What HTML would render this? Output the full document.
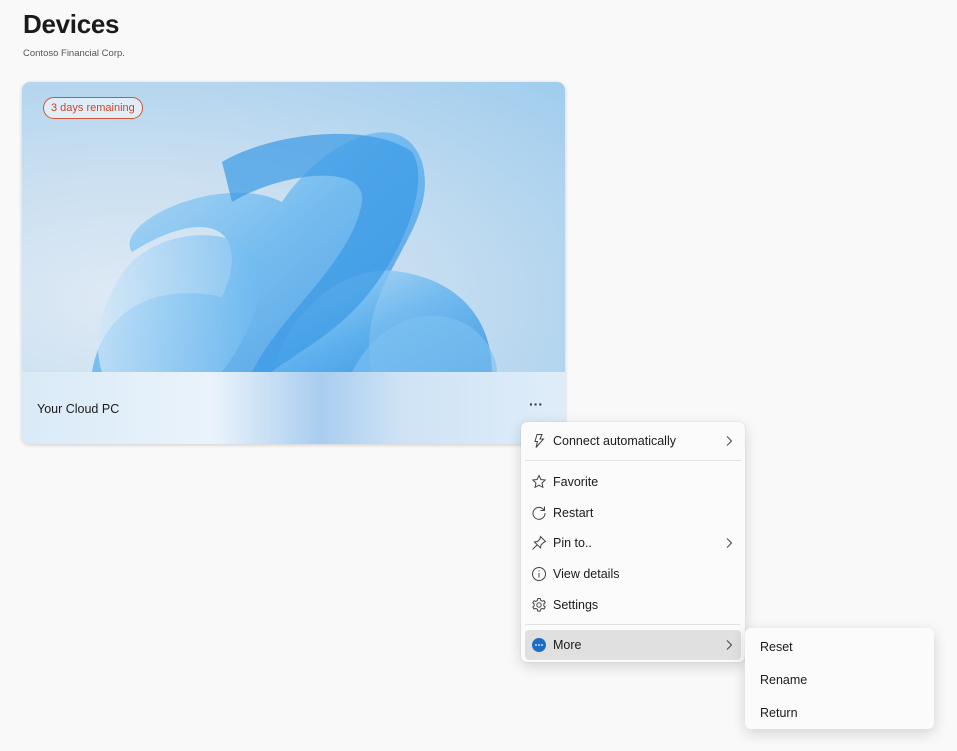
<!DOCTYPE html>
<html><head><meta charset="utf-8">
<style>
*{box-sizing:border-box;margin:0;padding:0}
body{width:957px;height:751px;background:#f9f9f9;font-family:"Liberation Sans",sans-serif;position:relative;overflow:hidden;color:#1b1b1b}
h1{position:absolute;left:23px;top:9px;font-size:26px;font-weight:bold;letter-spacing:-0.3px}
.sub{position:absolute;left:23px;top:48px;font-size:9.5px;color:#555}
.card{position:absolute;left:22px;top:82px;width:543px;height:362px;border-radius:8px;overflow:hidden;box-shadow:0 1px 4px rgba(0,0,0,.18);background:radial-gradient(ellipse at 20% 60%,#dfeaf5 0%,#c8def0 45%,#9fcdee 100%)}
.badge{position:absolute;left:21px;top:15px;height:22px;padding:0 7px;border:1.5px solid #d2553a;border-radius:11px;color:#c8452a;font-size:11px;line-height:20px;background:rgba(255,255,255,.55)}
.band{position:absolute;left:0;top:290px;width:543px;height:72px;background:linear-gradient(90deg,#d9eaf7 0%,#eaf3fb 35%,#a9cdef 55%,#cfe3f5 70%,#dfedf9 100%)}
.band span{position:absolute;left:15px;top:30px;font-size:12.5px}
.dots{position:absolute;left:507px;top:24px;font-size:14px;font-weight:bold;letter-spacing:0px;color:#333}
.menu{position:absolute;left:521px;top:422px;width:224px;height:240px;background:#fbfbfb;border-radius:6px;box-shadow:0 4px 14px rgba(0,0,0,.16),0 0 1px rgba(0,0,0,.2)}
.it{position:absolute;left:0;width:224px;height:30px;font-size:12.5px;line-height:30px}
.it svg{position:absolute;left:10px;top:7px}
.it .t{position:absolute;left:32px}
.it svg.ch{left:auto;right:10px;top:9px}
.sep{position:absolute;left:4px;width:216px;height:1px;background:#e3e3e3}
.more{background:#e0e0e0;border-radius:4px;left:4px;width:216px}
.sm{position:absolute;left:745px;top:628px;width:189px;height:101px;background:#fbfbfb;border-radius:6px;box-shadow:0 4px 14px rgba(0,0,0,.16)}
.sm div{position:absolute;left:15px;font-size:12.5px}
</style></head><body>
<h1>Devices</h1>
<div class="sub">Contoso Financial Corp.</div>
<div class="card">
<svg width="543" height="290" style="position:absolute;left:0;top:0">
<defs>
<linearGradient id="g1" x1="0" y1="0" x2="1" y2="1"><stop offset="0" stop-color="#bfe0f7"/><stop offset=".5" stop-color="#5fb3ef"/><stop offset="1" stop-color="#2f8ee0"/></linearGradient>
<linearGradient id="g2" x1="0" y1="0" x2="1" y2="0"><stop offset="0" stop-color="#cfe6f8"/><stop offset="1" stop-color="#6dbaf0"/></linearGradient>
</defs>
<path d="M70 290 C80 230 130 200 200 215 C230 150 190 120 110 170 C90 140 200 90 260 120 C300 60 380 20 400 80 C420 150 330 200 350 290 Z" fill="url(#g1)" opacity=".8"/>
<path d="M95 200 C120 150 200 140 230 170 C250 200 230 250 200 290 L80 290 C70 260 80 225 95 200Z" fill="url(#g2)" opacity=".75"/>
<path d="M250 290 C270 220 330 180 380 190 C440 200 470 240 470 290 Z" fill="url(#g1)" opacity=".8"/>
<path d="M330 290 C360 230 420 220 455 250 C470 265 475 280 475 290Z" fill="#7cc2f1" opacity=".65"/>
<path d="M200 80 C250 50 350 40 390 70 C410 100 380 180 330 230 C300 260 260 280 250 290 L230 290 C260 230 330 180 340 120 C345 80 260 90 210 120Z" fill="#3a9ae6" opacity=".7"/>
</svg>
<div class="badge">3 days remaining</div>
<div class="band"><span>Your Cloud PC</span><div class="dots">···</div></div>
</div>

<div class="menu">
<div class="it" style="top:4px"><svg width="16" height="16" viewBox="0 0 16 16" fill="none" stroke="#444" stroke-width="1"><path d="M6 1.5h5l-2 4.5h3.5L5 14.5l1.5-6H4z"/></svg><span class="t">Connect automatically</span><svg class="ch" width="12" height="12" viewBox="0 0 12 12" fill="none" stroke="#444"><path d="M4 1.5l4.5 4.5L4 10.5"/></svg></div>
<div class="sep" style="top:38px"></div>
<div class="it" style="top:45px"><svg width="16" height="16" viewBox="0 0 16 16" fill="none" stroke="#444"><path d="M8 1.5l1.9 4 4.3.5-3.2 3 .9 4.3L8 11.2l-3.9 2.1.9-4.3-3.2-3 4.3-.5z"/></svg><span class="t">Favorite</span></div>
<div class="it" style="top:76px"><svg width="16" height="16" viewBox="0 0 16 16" fill="none" stroke="#444"><path d="M13 5A6 6 0 1 0 14 8"/><path d="M13.5 1.5V5.5H9.5"/></svg><span class="t">Restart</span></div>
<div class="it" style="top:106px"><svg width="16" height="16" viewBox="0 0 16 16" fill="none" stroke="#444"><path d="M9.5 1.5l5 5-2 1-2.5 2.5-.5 3L3.5 7l3-.5L9 4z"/><path d="M6 10l-4.5 4.5"/></svg><span class="t">Pin to..</span><svg class="ch" width="12" height="12" viewBox="0 0 12 12" fill="none" stroke="#444"><path d="M4 1.5l4.5 4.5L4 10.5"/></svg></div>
<div class="it" style="top:137px"><svg width="16" height="16" viewBox="0 0 16 16" fill="none" stroke="#444"><circle cx="8" cy="8" r="6.5"/><path d="M8 7v4.5M8 4.5v1"/></svg><span class="t">View details</span></div>
<div class="it" style="top:168px"><svg width="16" height="16" viewBox="0 0 16 16" fill="none" stroke="#444"><circle cx="8" cy="8" r="2.2"/><path d="M6.8 1.5h2.4l.4 1.8 1.6.9 1.8-.6 1.2 2-1.4 1.3v1.8l1.4 1.3-1.2 2-1.8-.6-1.6.9-.4 1.8H6.8l-.4-1.8-1.6-.9-1.8.6-1.2-2 1.4-1.3V7.1L1.8 5.8l1.2-2 1.8.6 1.6-.9z"/></svg><span class="t">Settings</span></div>
<div class="sep" style="top:202px"></div>
<div class="it more" style="top:208px"><svg width="16" height="16" viewBox="0 0 16 16" style="left:6px"><circle cx="8" cy="8" r="7" fill="#1a6fc4"/><circle cx="5" cy="8" r=".9" fill="#fff"/><circle cx="8" cy="8" r=".9" fill="#fff"/><circle cx="11" cy="8" r=".9" fill="#fff"/></svg><span class="t" style="left:28px">More</span><svg class="ch" width="12" height="12" viewBox="0 0 12 12" fill="none" stroke="#444" style="right:6px"><path d="M4 1.5l4.5 4.5L4 10.5"/></svg></div>
</div>

<div class="sm">
<div style="top:12px">Reset</div>
<div style="top:45px">Rename</div>
<div style="top:78px">Return</div>
</div>
</body></html>
